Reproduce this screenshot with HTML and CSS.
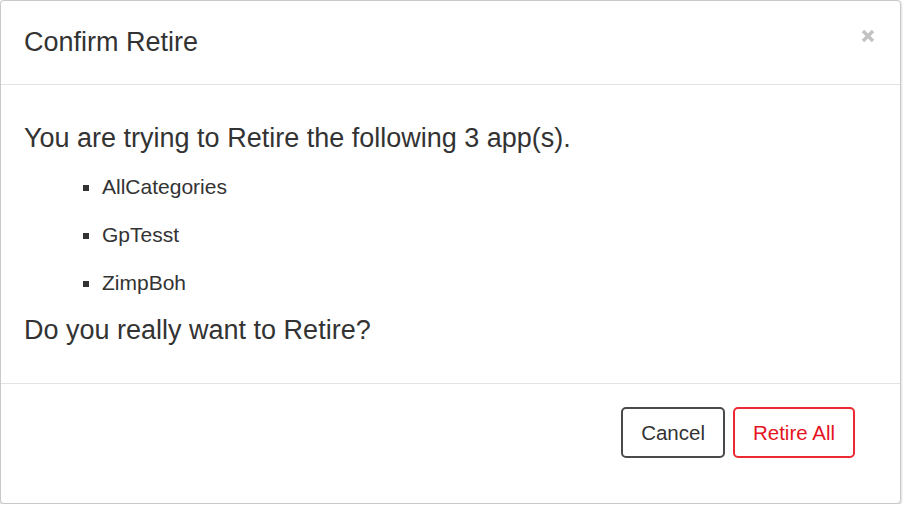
FILE: index.html
```html
<!DOCTYPE html>
<html lang="en">
<head>
  <meta charset="UTF-8">
  <title>Confirm Retire</title>
  <link rel="stylesheet" href="styles.css">
</head>
<body>
  <div class="modal">
    <div class="modal-header">
      <h4 class="modal-title">Confirm Retire</h4>
      <button class="close" aria-label="Close">
        <svg width="14" height="14" viewBox="0 0 14 14">
          <path d="M2 2 L12 12 M12 2 L2 12" stroke="currentColor" stroke-width="3.4" stroke-linecap="butt"/>
        </svg>
      </button>
    </div>
    <div class="modal-body">
      <p class="lead">You are trying to Retire the following 3 app(s).</p>
      <ul class="app-list">
        <li>AllCategories</li>
        <li>GpTesst</li>
        <li>ZimpBoh</li>
      </ul>
      <p class="question">Do you really want to Retire?</p>
    </div>
    <div class="modal-footer">
      <button class="btn btn-default">Cancel</button>
      <button class="btn btn-danger">Retire All</button>
    </div>
  </div>
</body>
</html>
```

FILE: styles.css
```css
body {
  margin: 0;
  background: #fff;
  font-family: 'Liberation Sans', Arial, sans-serif;
  color: #333;
}
.modal {
  width: 899px;
  border: 1px solid #c9c9c9;
  border-radius: 4px;
  background: #fff;
  box-shadow: 0 1px 3px rgba(0, 0, 0, 0.25);
}
.modal-header {
  position: relative;
  padding: 22px 23px 23px;
  border-bottom: 1px solid #e3e3e3;
}
.modal-title {
  margin: 0;
  font-size: 27px;
  font-weight: normal;
  line-height: 38px;
}
/* close icon sits over the header corner */
.close {
  position: absolute;
  top: 28px;
  right: 25px;
  padding: 0;
  border: none;
  background: none;
  color: #c2c2c2;
  cursor: pointer;
  line-height: 0;
}
.modal-body {
  padding: 24px 23px;
}
.lead,
.question {
  margin: 0;
  font-size: 27px;
  line-height: 38px;
}
.lead {
  margin-top: 10px;
}
.question {
  margin-top: 4px;
  margin-bottom: 10px;
}
.app-list {
  margin: 6px 0 0;
  padding-left: 78px;
  list-style: square;
  font-size: 21px;
  line-height: 48px;
}
.modal-footer {
  display: flex;
  justify-content: flex-end;
  gap: 8px;
  padding: 23px 45px 45px;
  border-top: 1px solid #e3e3e3;
}
.btn {
  box-sizing: border-box;
  height: 51px;
  padding: 0 18px;
  border-radius: 5px;
  background: #fff;
  font-family: inherit;
  font-size: 20.5px;
  cursor: pointer;
}
.btn-default {
  border: 2px solid #4a4a4a;
  color: #333;
}
.btn-danger {
  border: 2px solid #ec2a33;
  color: #e5141e;
}
```
